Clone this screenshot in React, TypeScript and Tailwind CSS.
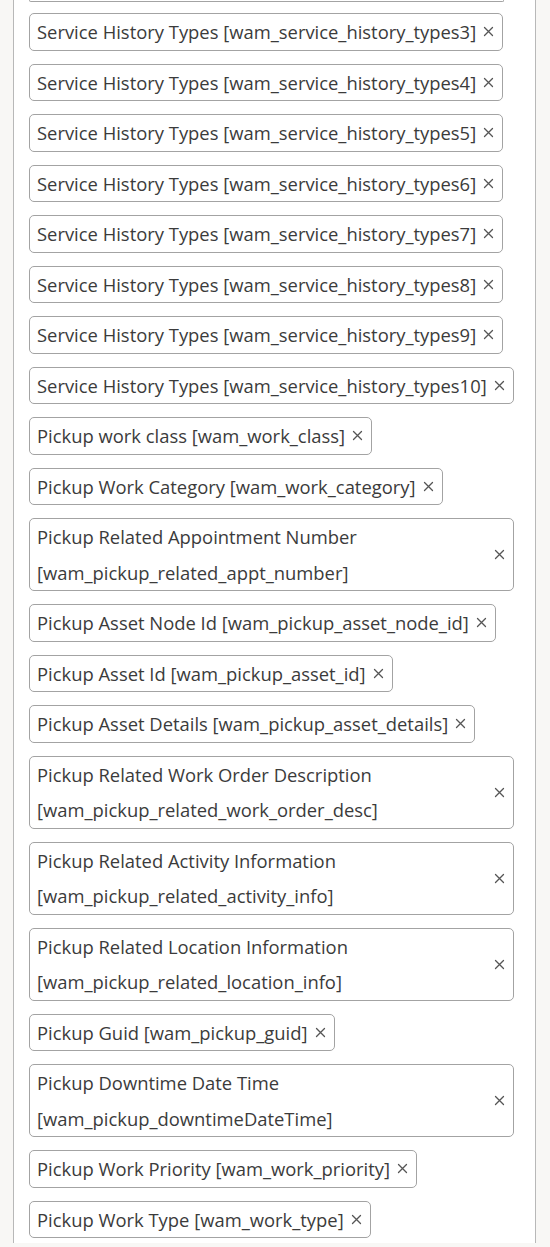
import React from "react";

const items: string[] = [
  "Service History Types [wam_service_history_types3]",
  "Service History Types [wam_service_history_types4]",
  "Service History Types [wam_service_history_types5]",
  "Service History Types [wam_service_history_types6]",
  "Service History Types [wam_service_history_types7]",
  "Service History Types [wam_service_history_types8]",
  "Service History Types [wam_service_history_types9]",
  "Service History Types [wam_service_history_types10]",
  "Pickup work class [wam_work_class]",
  "Pickup Work Category [wam_work_category]",
  "Pickup Related Appointment Number [wam_pickup_related_appt_number]",
  "Pickup Asset Node Id [wam_pickup_asset_node_id]",
  "Pickup Asset Id [wam_pickup_asset_id]",
  "Pickup Asset Details [wam_pickup_asset_details]",
  "Pickup Related Work Order Description [wam_pickup_related_work_order_desc]",
  "Pickup Related Activity Information [wam_pickup_related_activity_info]",
  "Pickup Related Location Information [wam_pickup_related_location_info]",
  "Pickup Guid [wam_pickup_guid]",
  "Pickup Downtime Date Time [wam_pickup_downtimeDateTime]",
  "Pickup Work Priority [wam_work_priority]",
  "Pickup Work Type [wam_work_type]",
];

function XIcon() {
  return (
    <svg width="11" height="11" viewBox="0 0 11 11" className="shrink-0 ml-[7px]">
      <path d="M1.5 1.5 L9.5 9.5 M9.5 1.5 L1.5 9.5" stroke="#555" strokeWidth="1.3" strokeLinecap="round" />
    </svg>
  );
}

function Chip({ label }: { label: string }) {
  return (
    <div className="inline-flex items-center max-w-full border border-[#a3a3a3] rounded-[5px] pl-[7px] pr-[8px] bg-white">
      <span className="leading-[35.5px] min-w-0">{label}</span>
      <XIcon />
    </div>
  );
}

export default function App() {
  return (
    <div className="w-[550px] h-[1247px] bg-[#f8f7f5] overflow-hidden" style={{ fontFamily: '"Open Sans", "Noto Sans", sans-serif' }}>
      <div className="ml-[13px] w-[523px] h-[1243px] bg-white border-l border-r border-[#b8b8b8] overflow-hidden">
        <div className="pl-[15px] pr-[21px] flex flex-col items-start gap-[13px] text-[18.4px] text-[#3b3b3b]">
          <div className="w-[475px] h-[2px] -mb-[2px] border-b border-l border-r border-[#a3a3a3] rounded-b-[5px]" />
          {items.map((t) => (
            <Chip key={t} label={t} />
          ))}
        </div>
      </div>
    </div>
  );
}
